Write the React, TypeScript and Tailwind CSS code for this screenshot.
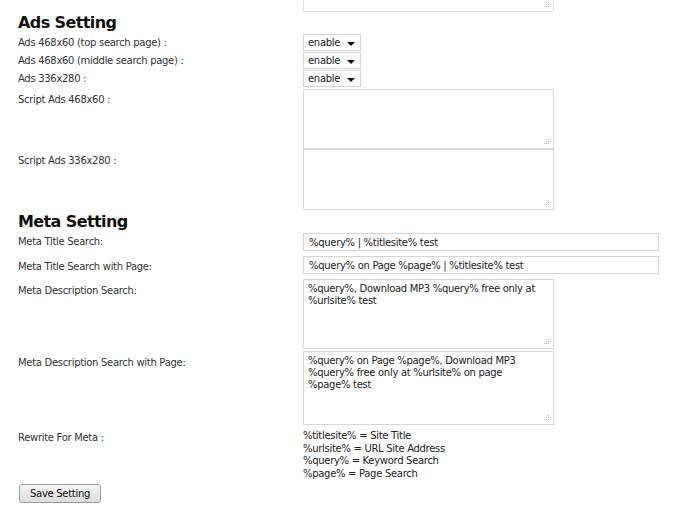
import React from "react";

const font = { fontFamily: '"DejaVu Sans", Verdana, sans-serif', letterSpacing: "-0.3px" };

function Select() {
  return (
    <div className="relative w-[58px] h-[17px] border border-[#d4d4d4] bg-white flex items-center pl-[4px] text-[10px] text-[#222]">
      <span>enable</span>
      <svg className="absolute right-[5px] top-[7px]" width="8" height="4" viewBox="0 0 8 4">
        <path d="M0 0 L8 0 L4 4 Z" fill="#111" />
      </svg>
    </div>
  );
}

function Grip() {
  return (
    <svg className="absolute right-[3px] bottom-[3px]" width="7" height="7" viewBox="0 0 7 7">
      <rect x="5" y="1" width="1" height="1" fill="#b5b5b5" />
      <rect x="3" y="3" width="1" height="1" fill="#b5b5b5" />
      <rect x="5" y="3" width="1" height="1" fill="#b5b5b5" />
      <rect x="1" y="5" width="1" height="1" fill="#b5b5b5" />
      <rect x="3" y="5" width="1" height="1" fill="#b5b5b5" />
      <rect x="5" y="5" width="1" height="1" fill="#b5b5b5" />
    </svg>
  );
}

function Area({ h, lines = [] }: { h: string; lines?: string[] }) {
  return (
    <div className={`relative w-[251px] ${h} border border-[#d8d8d8] bg-white px-[4px] pt-[3px] text-[10px] leading-[12px] text-[#222]`}>
      {lines.map((l, i) => (
        <div key={i} className="whitespace-nowrap">{l}</div>
      ))}
      <Grip />
    </div>
  );
}

function Input({ value }: { value: string }) {
  return (
    <div className="w-[356px] h-[18px] border border-[#d4d4d4] bg-white flex items-center pl-[5px] text-[10px] text-[#222]">
      {value}
    </div>
  );
}

export default function App() {
  return (
    <div style={font} className="w-[700px] h-[516px] bg-white overflow-hidden text-[10px] text-[#333] pl-[18px]">
      <div className="grid grid-cols-[285px_1fr]">
        <div className="h-[12px]" />
        <div className="h-[12px] relative w-[251px] border border-t-0 border-[#e0e0e0]">
          <Grip />
        </div>

        <div className="col-span-2 h-[21px] flex items-end text-[16px] font-bold text-[#111] leading-[20px] tracking-[-0.6px]">Ads Setting</div>

        <div className="h-[18px] flex items-center">Ads 468x60 (top search page) :</div>
        <div className="h-[18px] flex items-center"><Select /></div>
        <div className="h-[18px] flex items-center">Ads 468x60 (middle search page) :</div>
        <div className="h-[18px] flex items-center"><Select /></div>
        <div className="h-[19px] flex items-center">Ads 336x280 :</div>
        <div className="h-[19px] flex items-center"><Select /></div>

        <div className="h-[61px] pt-[4px]">Script Ads 468x60 :</div>
        <div className="h-[61px] pt-[1px]"><Area h="h-[60px]" /></div>
        <div className="h-[61px] pt-[4px]">Script Ads 336x280 :</div>
        <div className="h-[61px]"><Area h="h-[61px]" /></div>

        <div className="col-span-2 h-[22px] flex items-end text-[16px] font-bold text-[#111] leading-[20px] tracking-[-0.6px]">Meta Setting</div>

        <div className="h-[24px] pt-[2px]">Meta Title Search:</div>
        <div className="h-[24px] pt-[1px]"><Input value="%query% | %titlesite% test" /></div>
        <div className="h-[23px] pt-[3px]">Meta Title Search with Page:</div>
        <div className="h-[23px]"><Input value="%query% on Page %page% | %titlesite% test" /></div>

        <div className="h-[72px] pt-[4px]">Meta Description Search:</div>
        <div className="h-[72px]">
          <Area h="h-[70px]" lines={["%query%, Download MP3 %query% free only at", "%urlsite% test"]} />
        </div>
        <div className="h-[78px] pt-[4px]">Meta Description Search with Page:</div>
        <div className="h-[78px]">
          <Area
            h="h-[74px]"
            lines={["%query% on Page %page%, Download MP3", "%query% free only at %urlsite% on page", "%page% test"]}
          />
        </div>

        <div className="pt-[1px]">Rewrite For Meta :</div>
        <div className="pt-[1px] leading-[12.5px] text-[#222]">
          <div>%titlesite% = Site Title</div>
          <div>%urlsite% = URL Site Address</div>
          <div>%query% = Keyword Search</div>
          <div>%page% = Page Search</div>
        </div>
      </div>
      <div className="mt-[4px] ml-[1px]">
        <button style={font} className="w-[82px] h-[19px] border border-[#9a9a9a] rounded-[3px] bg-gradient-to-b from-[#f6f6f6] to-[#dcdcdc] text-[10px] text-[#111]">
          Save Setting
        </button>
      </div>
    </div>
  );
}
